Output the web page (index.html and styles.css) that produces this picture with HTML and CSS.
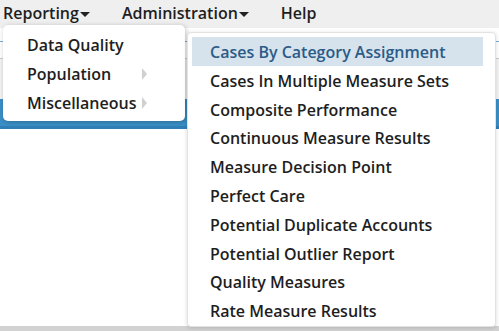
FILE: index.html
```html
<!DOCTYPE html>
<html>
   <head>
      <meta name="viewport" content="width=device-width, initial-scale=1">
      <link rel="stylesheet" href="styles.css">
   </head>
   <body>
      <div class="menubar">
         <a class="topitem">Reporting<span class="caret"></span></a>
         <a class="topitem">Administration<span class="caret"></span></a>
         <a class="topitem">Help</a>
      </div>
      <div class="page">
         <div class="rule"></div>
         <div class="band"></div>
         <div class="tab"></div>
         <div class="footer"></div>
      </div>
      <ul class="dropdown">
         <li>Data Quality</li>
         <li>Population<span class="arrow"></span></li>
         <li>Miscellaneous<span class="arrow"></span></li>
      </ul>
      <ul class="submenu">
         <li class="active">Cases By Category Assignment</li>
         <li>Cases In Multiple Measure Sets</li>
         <li>Composite Performance</li>
         <li>Continuous Measure Results</li>
         <li>Measure Decision Point</li>
         <li>Perfect Care</li>
         <li>Potential Duplicate Accounts</li>
         <li>Potential Outlier Report</li>
         <li>Quality Measures</li>
         <li>Rate Measure Results</li>
      </ul>
   </body>
</html>
```

FILE: styles.css
```css
body {
margin: 0;
font-family: "Open Sans", sans-serif;
font-size: 16px;
font-weight: 600;
color: #1e1e1e;
background: #fff;
width: 499px;
height: 331px;
overflow: hidden;
position: relative;
}
.menubar {
display: flex;
height: 28px;
background-color: #efefef;
padding-left: 3px;
align-items: center;
}
.topitem {
display: flex;
align-items: center;
margin-right: 32px;
line-height: 24px;
margin-top: -2px;
}
.caret {
width: 0;
height: 0;
margin-left: 1px;
margin-top: 3px;
border-left: 5px solid transparent;
border-right: 5px solid transparent;
border-top: 5px solid #222;
}
.page {
height: 303px;
display: flex;
flex-direction: column;
}
.rule {
height: 1px;
margin-top: 13px;
background-color: #7aaed3;
}
.band {
height: 40px;
margin-top: 16px;
border-top: 1px solid #ccc;
background-color: #f3f3f3;
}
.tab {
height: 27px;
background-color: #3b8fc6;
border-bottom: 3px solid #2f7fb6;
}
.footer {
margin-top: auto;
height: 5px;
background-color: #d2d2d2;
}
.dropdown {
position: absolute;
top: 25px;
left: 3px;
width: 182px;
margin: 0;
padding: 5px 0 4px 0;
list-style: none;
background: #fff;
border-radius: 5px;
box-shadow: 1px 1px 5px rgba(0, 0, 0, 0.25);
}
.dropdown li {
display: flex;
align-items: center;
height: 29px;
padding-left: 24px;
}
.arrow {
width: 0;
height: 0;
margin-left: auto;
margin-right: 38px;
border-top: 6px solid transparent;
border-bottom: 6px solid transparent;
border-left: 5px solid #d0d0d0;
}
.submenu {
position: absolute;
top: 32px;
left: 187px;
width: 307px;
height: 289px;
margin: 0;
padding: 4px 0 0 0;
list-style: none;
background: #fff;
border: 1px solid #e2e2e2;
border-radius: 4px;
box-shadow: 0 1px 4px rgba(0, 0, 0, 0.15);
}
.submenu li {
height: 28.8px;
line-height: 31px;
padding-left: 18px;
margin: 0 12px 0 4px;
white-space: nowrap;
}
.submenu li.active {
background-color: #d6e2ec;
color: #2b5b87;
}
```
